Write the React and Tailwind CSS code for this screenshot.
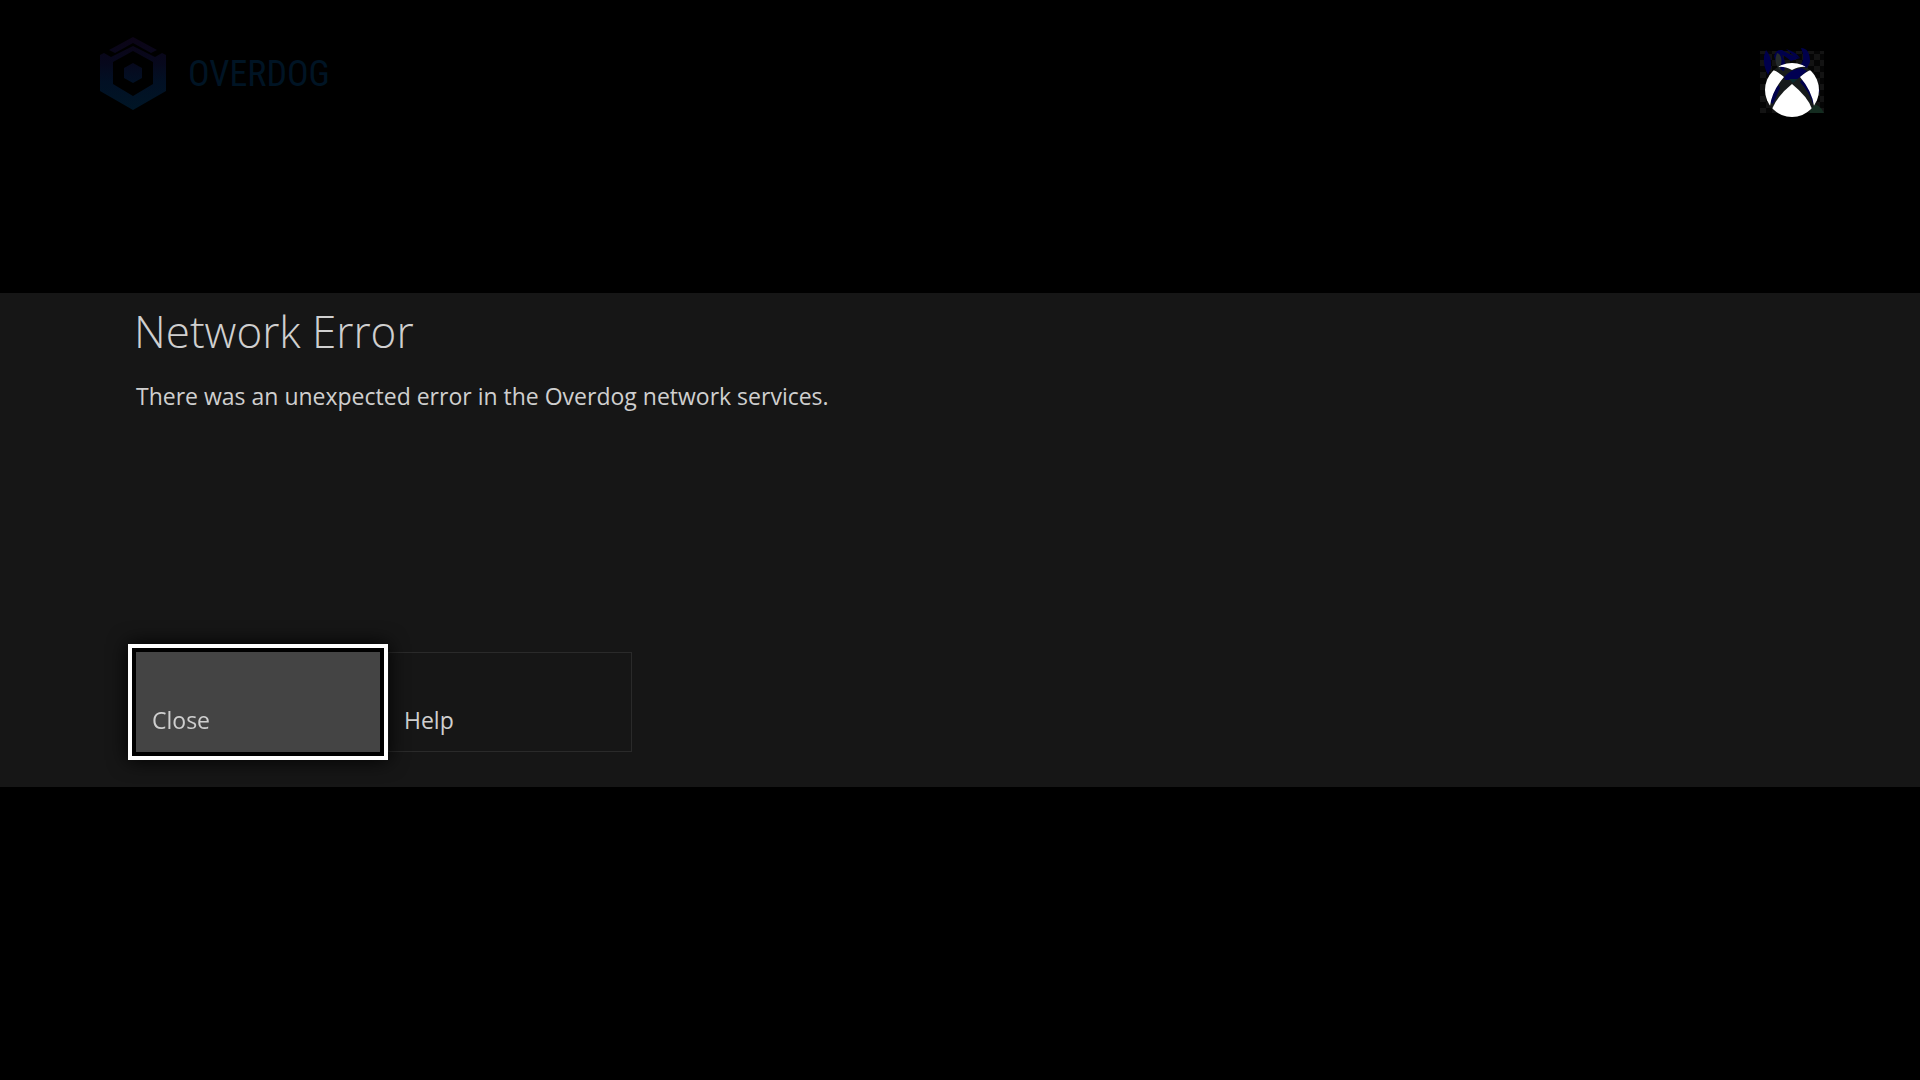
import React from 'react';

const OverdogMark = () => (
  <svg viewBox="0 0 66 76" className="w-[66px] h-[76px]" aria-hidden="true">
    <defs>
      <linearGradient id="mark" gradientUnits="userSpaceOnUse" x1="0" y1="0" x2="0" y2="76">
        <stop offset="0" stopColor="#0c0416" />
        <stop offset="0.35" stopColor="#07081c" />
        <stop offset="0.6" stopColor="#021024" />
        <stop offset="1" stopColor="#001626" />
      </linearGradient>
    </defs>
    <g fill="url(#mark)">
      <path d="M33 1 L57 14 L51 17 L33 7 L15 17 L9 14 Z" />
      <path d="M0 19 L4 17 L11 21 L33 10 L55 21 L62 17 L66 19 V55 L33 74 L0 55 Z M33 15 L13 26 V48 L33 60 L53 48 V26 Z" fillRule="evenodd" />
      <path d="M33 27 L42 32 V42 L33 47 L24 42 V32 Z" />
    </g>
  </svg>
);

const XboxBadge = () => (
  <svg viewBox="0 0 66 70" className="w-[66px] h-[70px]" role="img" aria-label="Xbox">
    <defs>
      <pattern id="checks" width="12" height="12" patternUnits="userSpaceOnUse">
        <rect width="12" height="12" fill="#050505" />
        <rect width="6" height="6" fill="#131313" />
        <rect x="6" y="6" width="6" height="6" fill="#131313" />
      </pattern>
      <clipPath id="ball">
        <circle cx="32" cy="42" r="27" />
      </clipPath>
    </defs>
    <rect y="3" width="64" height="62" fill="url(#checks)" />
    <path d="M50 55 Q60 56 64 65 H50 Z" fill="#142c20" />
    <circle cx="32" cy="42" r="27" fill="#171b1b" />
    <g fill="#00004c">
      <path d="M6 2 Q12 8 11 20 L8 27 Q3 18 4 8 Z" />
      <path d="M14 8 Q16 1 22 2 Q32 8 40 10 L31 13 Q25 8 22 7 Q27 14 24 23 Q18 22 14 8 Z" />
      <path d="M26 1 Q36 4 40 10 L34 8 Z" />
      <path d="M41 0 Q50 0 50 14 L47 20 L40 18 Q46 11 41 0 Z" />
      <path d="M49 24 L40 34 Q50 45 53 56 L60 43 Z" />
      <path d="M16 33 L8 53 L13 56 L20 40 Z" />
    </g>
    <path d="M17 5 Q24 7 20 22 Q13 15 17 5 Z" fill="#252b2b" />
    <g clipPath="url(#ball)">
      <path d="M18 19 Q24 14 32 14 Q40 14 46 19 Q40 18 32 22 Q24 18 18 19 Z" fill="#fff" />
      <path d="M24 29 Q31 21 42 20 L47 23 L40 29 L36 32 H25 Z" fill="#000052" />
      <path d="M29 31 H38 L33 35 Z" fill="#09292c" />
      <path d="M13 22 Q17 23 24 29 Q12 43 10 58 H2 V20 Z" fill="#fff" />
      <path d="M51 22 Q47 23 40 29 Q52 43 54 58 H64 V20 Z" fill="#fff" />
      <path d="M32 36 Q48 49 52 61 L46 72 H18 L12 61 Q17 48 32 36 Z" fill="#fff" />
    </g>
  </svg>
);

const App = () => {
  return (
    <div className="min-h-screen grid grid-rows-[1fr_auto_1fr] bg-black text-[#cfcfcf] font-['Open_Sans','Noto_Sans',sans-serif]">
      <header className="flex items-start justify-between pl-[100px] pr-[94px] pt-9">
        <div className="flex items-center gap-[22px]">
          <OverdogMark />
          <span className="text-4xl leading-none text-[#001424] font-['Roboto_Condensed','Liberation_Sans_Narrow',sans-serif]">
            OVERDOG
          </span>
        </div>
        <div className="pt-3">
          <XboxBadge />
        </div>
      </header>

      <main
        role="alertdialog"
        aria-labelledby="error-title"
        aria-describedby="error-text"
        className="bg-[#161616] px-[136px] pt-2 pb-[35px]"
      >
        <h1 id="error-title" className="-ml-0.5 text-[44px] leading-[60px] font-light">
          Network Error
        </h1>
        <p id="error-text" className="mt-[19px] text-[23px] leading-8">
          There was an unexpected error in the Overdog network services.
        </p>

        <div className="mt-60 flex gap-2">
          <button
            type="button"
            className="relative z-10 w-[244px] h-[100px] flex items-end px-4 pb-4 text-left text-[23px] leading-8 bg-[#444] ring-4 ring-black outline-4 outline-offset-4 outline-white drop-shadow-[0_0_10px_#000]"
          >
            Close
          </button>
          <button
            type="button"
            className="w-[244px] h-[100px] flex items-end px-[15px] pb-[15px] text-left text-[23px] leading-8 border border-[#2a2a2a]"
          >
            Help
          </button>
        </div>
      </main>
    </div>
  );
};

export default App;
